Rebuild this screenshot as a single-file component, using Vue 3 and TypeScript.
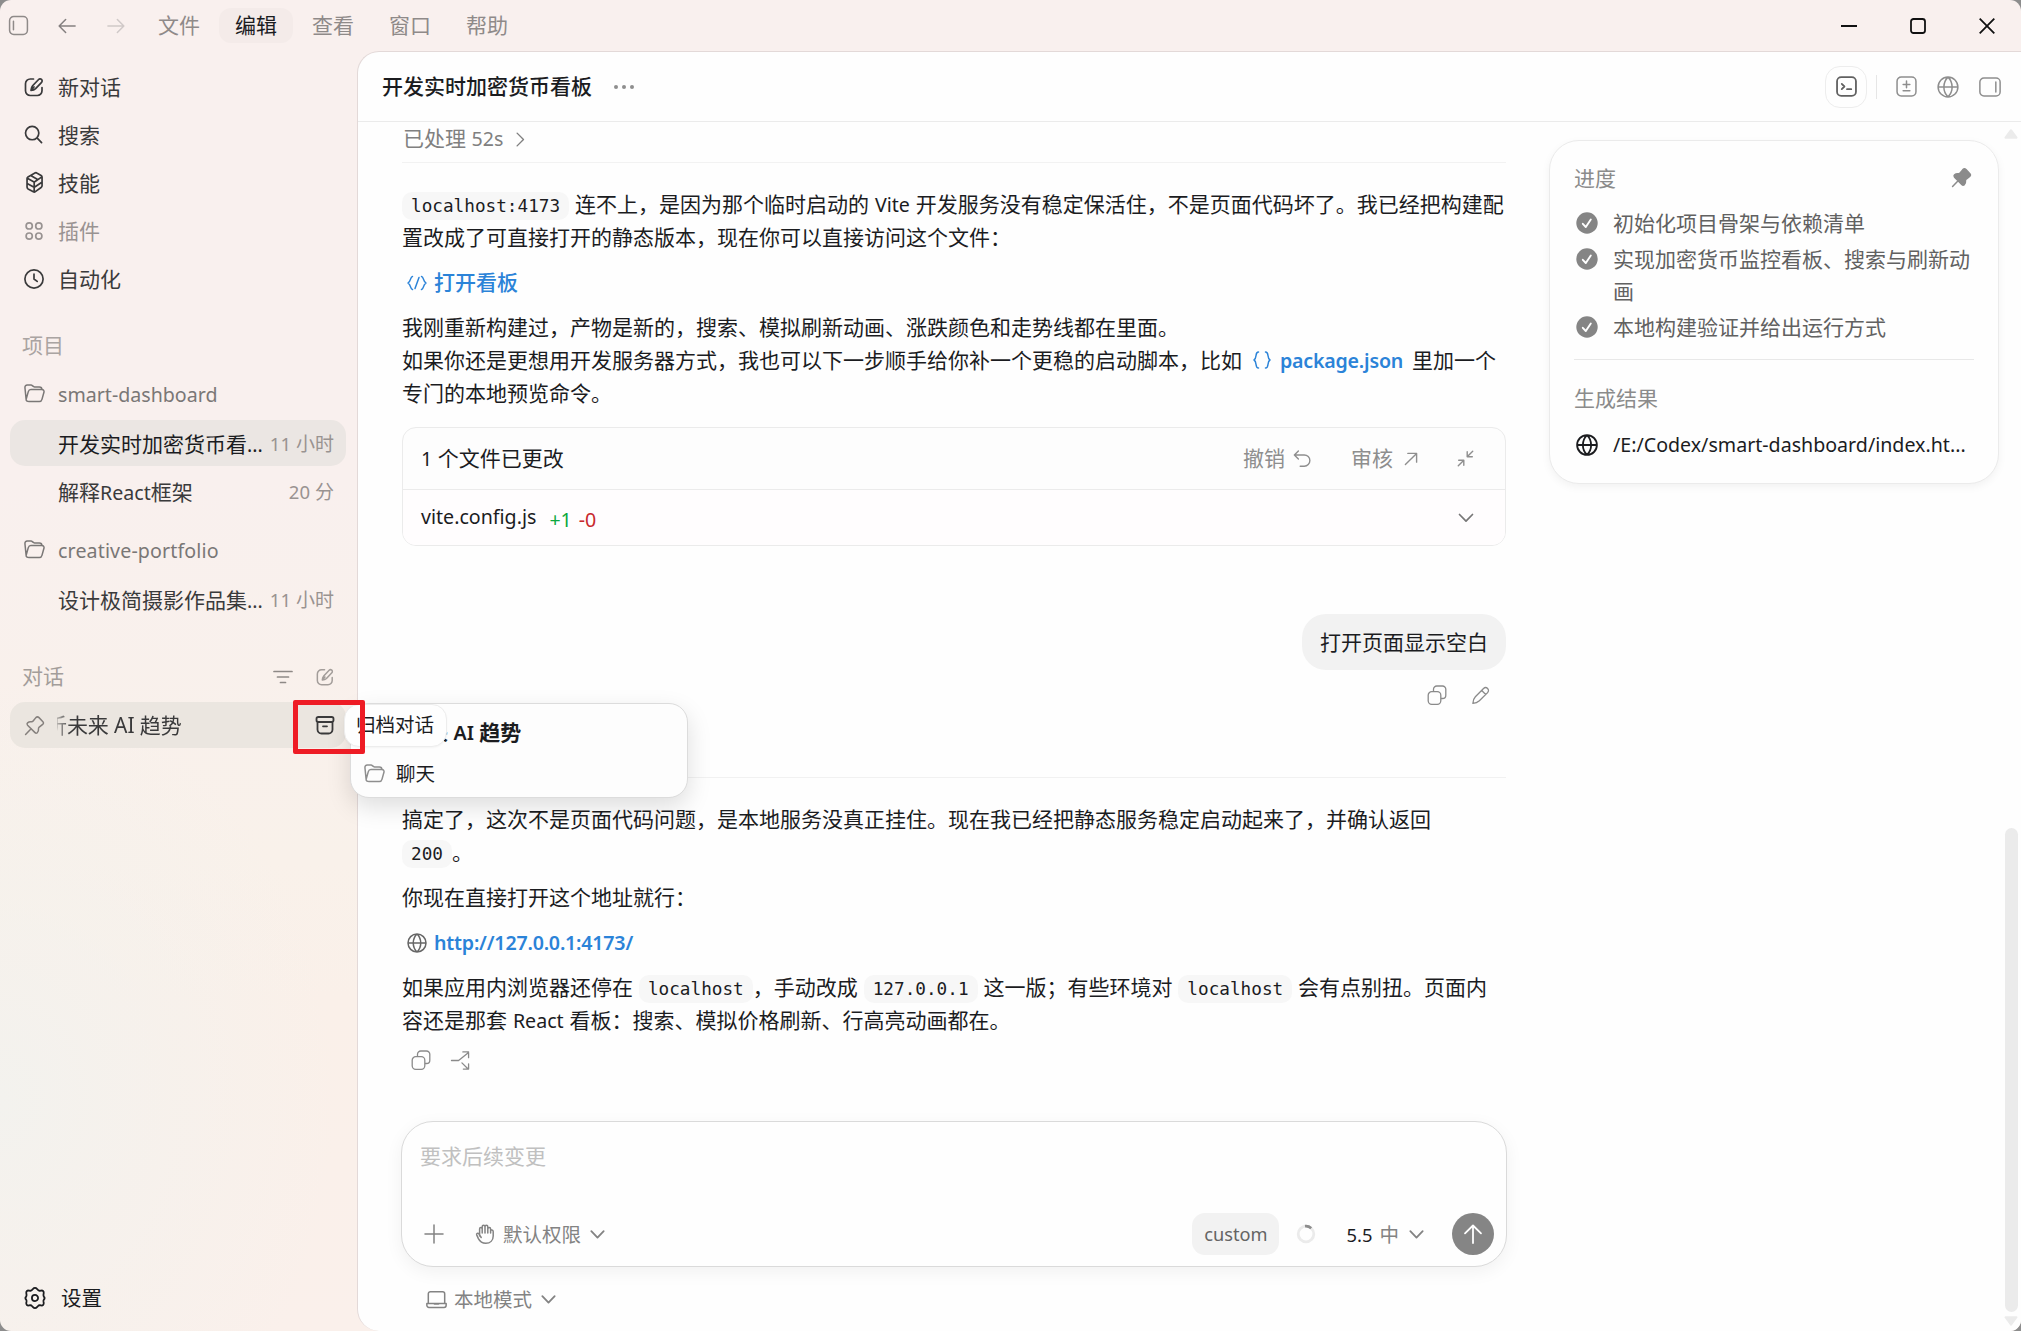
<script setup lang="ts">
import { h, type FunctionalComponent } from 'vue'

const paths: Record<string, string> = {
  sidebar: 'M5.5 1.5h9a4 4 0 0 1 4 4v9a4 4 0 0 1-4 4h-9a4 4 0 0 1-4-4v-9a4 4 0 0 1 4-4zM5.200 6v8',
  back: 'M19 10H1.500M8.500 2.800L1.300 10l7.200 7.200',
  forward: 'M1 10h17.500M11.500 2.800l7.200 7.200-7.200 7.200',
  compose: 'M9.500 2H6.200A4.700 4.700 0 0 0 1.500 6.700v7.100a4.700 4.700 0 0 0 4.700 4.700h7.100a4.700 4.700 0 0 0 4.700-4.700v-3.300M7 13.300c.1-2 .5-3.300 1.600-4.500l6-6.300a2 2 0 0 1 3 2.800l-6 6.300c-1.200 1.200-2.600 1.600-4.600 1.700zM7 13.300l3-3.300',
  search: 'M8.600 1.500a7 7 0 1 1 0 14 7 7 0 0 1 0-14zM13.700 13.600l4.800 4.900',
  cube: 'M10.800 .8c.5-.2.900-.2 1.300.1l4.200 2.400c.6.400.9.800.9 1.500v8.400c0 .7-.3 1.200-.9 1.600l-5.500 3.900c-.6.500-1.300.5-1.900.1l-5-2.700c-.7-.4-1-.9-1-1.700V6.300c0-.7.300-1.200.9-1.600zM3.200 6l5.500 3c.6.400 1.300.4 1.900 0L17 4.600M9.700 9.500V19M3 11l5.700 3.100c.6.300 1.300.3 1.900-.1L17 9.800M6.800 3.600l5.800 3.300',
  grid: 'M5.200 1.800a3.100 3.100 0 1 1 0 6.200 3.100 3.100 0 0 1 0-6.200zM14.800 1.800a3.100 3.100 0 1 1 0 6.200 3.100 3.100 0 0 1 0-6.200zM5.200 12a3.100 3.100 0 1 1 0 6.200 3.100 3.100 0 0 1 0-6.200zM14.800 12a3.100 3.100 0 1 1 0 6.200 3.100 3.100 0 0 1 0-6.200z',
  clock: 'M10 .9a9.100 9.100 0 1 1 0 18.200A9.100 9.100 0 0 1 10 .9zM10 5.200V10l3.200 2.400',
  folder: 'M2 15.500L.900 4.500C.8 2.900 1.700 2 3.100 2h3.600c1.300 0 1.700 1.700 3.300 1.700h4.600c1.700 0 2.500.9 2.600 2.600M4.800 17.600h9.800c1.400 0 2.200-.7 2.500-2L19 8.800c.4-1.500-.4-2.500-1.900-2.500H6.600c-1.300 0-2.100.6-2.500 1.900l-2 7c-.5 1.500.9 2.400 2.700 2.400z',
  filter: 'M1 4.500h18M4.500 10h11M7.500 15.500h5',
  pin: 'M1.500 18.500l5.300-5.500M11.300 2.500c1-1 2-1 3 0l3.500 3.600c1 1 1 2 0 2.800l-3.300 2.600c-.5.5-.8 1-.7 1.700.2 1.700-.2 2.900-1.300 3.800-.8.5-1.500.3-2-.2L3.400 9.700c-.7-.8-.7-1.500 0-2.200 1-.9 2.200-1.200 3.600-1 .7.100 1.300-.2 1.700-.7z',
  archive: 'M3.300 2h13.400c1.200 0 1.800.6 1.800 1.700v1.600c0 1.100-.6 1.700-1.800 1.700H3.300C2.100 7 1.500 6.400 1.500 5.300V3.700C1.500 2.600 2.100 2 3.300 2zM2.500 7v7.500a4 4 0 0 0 4 4h7a4 4 0 0 0 4-4V7M8 11.300h4',
  terminal: 'M5 1h10a4 4 0 0 1 4 4v10a4 4 0 0 1-4 4H5a4 4 0 0 1-4-4V5a4 4 0 0 1 4-4zM5.500 7.500L8 10l-2.500 2.500M10.500 12.500h4',
  diff: 'M5 1h10a4 4 0 0 1 4 4v10a4 4 0 0 1-4 4H5a4 4 0 0 1-4-4V5a4 4 0 0 1 4-4zM10 4.800v6.400M6.800 8h6.400M6.800 14h6.400',
  globe: 'M10 1a9 9 0 1 1 0 18 9 9 0 0 1 0-18zM10 1c5 5 5 13 0 18M10 1c-5 5-5 13 0 18M1 10h18',
  panel: 'M4.500 1.800h11A3.700 3.700 0 0 1 19.200 5.500v9a3.700 3.700 0 0 1-3.700 3.700h-11A3.700 3.700 0 0 1 .8 14.500v-9A3.700 3.700 0 0 1 4.500 1.800zM15.300 5.500v9',
  code: 'M5.500 3.500C3 4 4.500 7.500 1 10c3.500 2.500 2 6 4.500 6.500M14.500 3.500c2.500.5 1 4 4.500 6.500-3.500 2.500-2 6-4.500 6.500M12 4.500L8 15.500',
  braces: 'M6.500 2C2.500 2 5.500 8 2 10c3.500 2 .5 8 4.500 8M13.500 2c4 0 1 6 4.500 8-3.500 2-.5 8-4.500 8',
  chevDown: 'M3.500 6.500L10 13.200l6.500-6.700',
  chevRight: 'M6 2.500l7.500 7.500L6 17.500',
  undo: 'M6 1L1.500 5.500 6 10M1.500 5.500H12.500a6 6 0 0 1 0 12.500H8',
  upRight: 'M2 18L18 2M5.500 2H18v12.500',
  collapse: 'M18.500 1.500L12 8M12 2v6h6M1.500 18.500L8 12M2 12h6v6',
  copy: 'M4.700 6.700h5.600a3.500 3.500 0 0 1 3.500 3.500v5.600a3.500 3.500 0 0 1-3.500 3.500H4.700a3.500 3.500 0 0 1-3.500-3.500v-5.600a3.500 3.500 0 0 1 3.500-3.500zM6.500 6.500V4.300A3.300 3.300 0 0 1 9.800 1h5.700A3.300 3.300 0 0 1 18.800 4.300v5.900a3.300 3.300 0 0 1-3.300 3.300h-1.600',
  pencil: 'M2 18.300c.2-3.300.9-5.200 2.600-6.900l8.600-8.700a3 3 0 0 1 4.300 4.300l-8.700 8.600C7 17.300 5.200 18.200 2 18.300zM11.300 4.700l4.200 4.200',
  fork: 'M.5 10H8L18.500 1.500M12.500 1h6v6M11.500 12.500l6.500 6.500M18.500 13.500V19h-5.500',
  hand: 'M4.600 12V5c0-2 2.600-2 2.600 0v4M7.200 5.500V2.800c0-2 2.800-2 2.800 0V9M10 4.500V2.800c0-2 2.800-2 2.800 0V9M12.800 5c0-2 2.800-2 2.800 0v4M15.600 7c.2-1.500 2.600-1.300 2.600.5V12c0 4.300-3 7.300-7.400 7.300-3.600 0-5.900-1.700-7.400-4.700l-1.700-3.700c-.6-1.500 1.200-2.400 2.200-1l2.300 3.600',
  plus: 'M10 1v18M1 10h18',
  laptop: 'M4.200 2.500h11.600a2 2 0 0 1 2 2v9.200H2.200V4.500a2 2 0 0 1 2-2zM.8 13.700h6.400c.8.900 4.800.900 5.600 0h6.400v1.800a2 2 0 0 1-2 2H2.800a2 2 0 0 1-2-2z',
  up: 'M10 19V1.500M2 9.300l8-7.800 8 7.800',
  gear: 'M8.200 1.700c1-1.200 2.600-1.200 3.600 0l.9 1c.4.500.9.800 1.600.7l1.300-.2c1.600-.2 2.600 1 2.300 2.600l-.2 1.200c-.1.700 0 1.200.4 1.700.9 1 .9 1.700 0 2.700-.4.500-.5 1-.4 1.700l.2 1.200c.3 1.600-.7 2.800-2.300 2.500l-1.300-.2c-.7 0-1.200.2-1.600.7l-.9 1c-1 1.200-2.600 1.200-3.600 0l-.9-1c-.4-.5-.9-.7-1.600-.7l-1.300.2c-1.600.3-2.600-.9-2.300-2.500l.2-1.200c.1-.7 0-1.200-.4-1.700-.9-1-.9-1.700 0-2.700.4-.5.5-1 .4-1.700l-.2-1.200c-.3-1.600.7-2.800 2.300-2.600l1.300.2c.7.100 1.200-.2 1.600-.7zM10 7.200a2.800 2.800 0 1 1 0 5.600 2.800 2.800 0 0 1 0-5.600z',
}

interface IcoProps { n: string; s?: number; w?: number; fill?: string }
const Ico: FunctionalComponent<IcoProps> = (p) => {
  const s = p.s ?? 20
  return h('svg', { width: s, height: s, viewBox: '0 0 20 20', fill: p.fill ?? 'none', stroke: 'currentColor',
    'stroke-width': ((p.w ?? 1.5) * 20) / s, 'stroke-linecap': 'round', 'stroke-linejoin': 'round', style: 'flex:none;overflow:visible' },
    [h('path', { d: paths[p.n] })])
}
Ico.props = ['n', 's', 'w', 'fill']

const menus = ['文件', '编辑', '查看', '窗口', '帮助']
const nav = [
  { icon: 'compose', label: '新对话', size: 20 },
  { icon: 'search', label: '搜索', size: 19 },
  { icon: 'cube', label: '技能', size: 21 },
  { icon: 'grid', label: '插件', size: 20, off: true },
  { icon: 'clock', label: '自动化', size: 20 },
]
const steps = ['初始化项目骨架与依赖清单', '实现加密货币监控看板、搜索与刷新动画', '本地构建验证并给出运行方式']
</script>

<template>
  <div class="desktop">
    <div class="window">
      <header class="titlebar">
        <Ico n="sidebar" :s="21" class="t-side" />
        <Ico n="back" :s="18" class="t-back" />
        <Ico n="forward" :s="18" class="t-fwd" />
        <nav class="menus">
          <span v-for="m in menus" :key="m" :class="['menu', { on: m === '编辑' }]">{{ m }}</span>
        </nav>
        <div class="winbtns">
          <svg width="16" height="16" viewBox="0 0 16 16"><path d="M0 8h16" /></svg>
          <svg width="16" height="16" viewBox="0 0 16 16"><rect x="1" y="1" width="14" height="14" rx="2.500" /></svg>
          <svg width="16" height="16" viewBox="0 0 16 16"><path d="M.7 .7l14.600 14.600M15.300 .7L.7 15.300" /></svg>
        </div>
      </header>

      <div class="body">
        <aside class="side">
          <div v-for="i in nav" :key="i.label" :class="['nav', { off: i.off }]">
            <span class="slot"><Ico :n="i.icon" :s="i.size" :w="1.7" /></span>{{ i.label }}
          </div>
          <div class="sec">项目</div>
          <div class="proj"><span class="slot"><Ico n="folder" :s="21" /></span><span class="l">smart-dashboard</span></div>
          <div class="conv sel"><span class="name">开发实时加密货币看<span class="l">...</span></span><span class="time"><span class="n">11</span> 小时</span></div>
          <div class="conv second"><span class="name">解释<span class="l">React</span>框架</span><span class="time"><span class="n">20</span> 分</span></div>
          <div class="proj two"><span class="slot"><Ico n="folder" :s="21" /></span><span class="l cp">creative-portfolio</span></div>
          <div class="conv third"><span class="name">设计极简摄影作品集<span class="l">...</span></span><span class="time"><span class="n">11</span> 小时</span></div>
          <div class="chats"><span>对话</span><Ico n="filter" :s="20" :w="1.7" class="f" /><Ico n="compose" :s="18" /></div>
          <div class="chat"><Ico n="pin" :s="21" class="p" /><span class="clip"><span>析未来 AI 趋势</span></span><Ico n="archive" :s="20" :w="1.8" class="a" /></div>
          <div class="settings"><Ico n="gear" :s="22" :w="1.8" />设置</div>
        </aside>

        <main class="main">
          <div class="head">
            <h1>开发实时加密货币看板</h1>
            <span class="dots"><i></i><i></i><i></i></span>
            <div class="tools">
              <span class="term"><Ico n="terminal" :s="21" :w="1.8" /></span>
              <span class="bar"></span>
              <Ico n="diff" :s="21" />
              <Ico n="globe" :s="22" />
              <Ico n="panel" :s="22" />
            </div>
          </div>

          <div class="content">
            <div class="col">
              <div class="done">已处理 <span class="l">52s</span> <Ico n="chevRight" :s="17" :w="1.4" /></div>
              <p class="p1"><code>localhost:4173</code> 连不上，是因为那个临时启动的 <span class="l">Vite</span> 开发服务没有稳定保活住，不是页面代码坏了。我已经把构建配<br>置改成了可直接打开的静态版本，现在你可以直接访问这个文件：</p>
              <p class="lk"><Ico n="code" :s="20" /><a>打开看板</a></p>
              <p>我刚重新构建过，产物是新的，搜索、模拟刷新动画、涨跌颜色和走势线都在里面。<br>如果你还是更想用开发服务器方式，我也可以下一步顺手给你补一个更稳的启动脚本，比如 <span class="pk"><Ico n="braces" :s="20" /><a class="l">package.json</a></span> 里加一个<br>专门的本地预览命令。</p>

              <section class="files">
                <div class="fh"><span><span class="l">1</span> 个文件已更改</span><div class="acts"><span>撤销</span><Ico n="undo" :s="18" :w="1.4" /><span class="rv">审核</span><Ico n="upRight" :s="14" :w="1.4" class="ur" /><Ico n="collapse" :s="17" :w="1.4" /></div></div>
                <div class="fr"><span class="fn l">vite.config.js</span><span class="add">+1</span><span class="del">-0</span><Ico n="chevDown" :s="20" :w="1.7" class="cv" /></div>
              </section>

              <div class="bubble">打开页面显示空白</div>
              <div class="bi"><Ico n="copy" :s="20" :w="1.3" /><Ico n="pencil" :s="19" :w="1.3" /></div>
              <div class="rule"></div>

              <p class="r1">搞定了，这次不是页面代码问题，是本地服务没真正挂住。现在我已经把静态服务稳定启动起来了，并确认返回<br><code>200</code>。</p>
              <p>你现在直接打开这个地址就行：</p>
              <p class="lk url"><Ico n="globe" :s="20" /><a class="l">http://127.0.0.1:4173/</a></p>
              <p class="last">如果应用内浏览器还停在 <code>localhost</code>，手动改成 <code>127.0.0.1</code> 这一版；有些环境对 <code>localhost</code> 会有点别扭。页面内<br>容还是那套 <span class="l">React</span> 看板：搜索、模拟价格刷新、行高亮动画都在。</p>
              <div class="ri"><Ico n="copy" :s="20" :w="1.3" /><Ico n="fork" :s="19" :w="1.3" /></div>

              <div class="composer">
                <div class="ph">要求后续变更</div>
                <div class="cb">
                  <Ico n="plus" :s="20" />
                  <Ico n="hand" :s="20" class="hd" />
                  <span class="perm">默认权限</span>
                  <Ico n="chevDown" :s="19" :w="1.8" />
                  <span class="custom">custom</span>
                  <svg class="spin" width="20" height="20" viewBox="0 0 20 20" fill="none" stroke-width="2.800"><circle cx="10" cy="10" r="7.800" stroke="#ebebeb" /><path d="M9 2.200a7.800 7.800 0 0 1 6.200 2" stroke="#8d8d8d" /></svg>
                  <span class="ver">5.5</span><span class="mid">中</span>
                  <Ico n="chevDown" :s="19" :w="1.8" />
                  <span class="send"><Ico n="up" :s="20" :w="1.8" /></span>
                </div>
              </div>
              <div class="local"><Ico n="laptop" :s="21" /><span>本地模式</span><Ico n="chevDown" :s="19" :w="1.8" /></div>
            </div>

            <section class="card">
              <div class="ct"><span>进度</span><Ico n="pin" :s="21" fill="currentColor" class="fp" /></div>
              <div v-for="s in steps" :key="s" class="step">
                <svg width="22" height="22" viewBox="0 0 22 22"><circle cx="11" cy="11" r="10.700" fill="#858585" /><path d="M6.800 11.800l3 3.200 5-7.500" fill="none" stroke="#fff" stroke-width="1.900" stroke-linecap="round" stroke-linejoin="round" /></svg>
                <span>{{ s }}</span>
              </div>
              <div class="cr"></div>
              <div class="gt">生成结果</div>
              <div class="res"><Ico n="globe" :s="22" :w="1.8" /><span class="l">/E:/Codex/smart-dashboard/index.ht...</span></div>
            </section>

            <div class="scroll"><svg width="16" height="12" viewBox="0 0 16 12"><path d="M8 2.200L13.500 9.700h-11z" fill="#ebebeb" stroke="#ebebeb" stroke-width="2" stroke-linejoin="round" /></svg><div class="thumb"></div><svg width="16" height="12" viewBox="0 0 16 12"><path d="M8 9.700L2.500 2.200h11z" fill="#ebebeb" stroke="#ebebeb" stroke-width="2" stroke-linejoin="round" /></svg></div>
          </div>
        </main>
      </div>

      <div class="pop">
        <div class="pt">析未来 <span class="l">AI</span> 趋势</div>
        <div class="pf"><Ico n="folder" :s="21" /><span>聊天</span></div>
      </div>
      <div class="tip">归档对话</div>
      <div class="mark"></div>
    </div>
  </div>
</template>

<style>
html, body { margin: 0; overflow: hidden; }
</style>
<style scoped>
* { box-sizing: border-box; }
.desktop { width: 2021px; height: 1331px; background: #8d8d8d; font: 400 21px/33px "Noto Sans", "Noto Sans CJK SC", sans-serif; color: #1b1c1f; overflow: hidden; white-space: nowrap; }
.l { font-size: .934em; }
.n { font-size: .975em; }
.cp { letter-spacing: .13px; }
.window { position: relative; width: 2021px; height: 1331px; border-radius: 11px; overflow: hidden; display: flex; flex-direction: column;
  background: radial-gradient(ellipse 420px 520px at 0 1100px, #f3f2ee 0%, rgba(243,242,238,0) 80%), linear-gradient(180deg, #f9f0ee 0, #f9f0ee 480px, #f9f1ea 860px, #faf0e9 1000px, #faf0eb 1331px); }
.titlebar { height: 51px; flex: none; display: flex; align-items: center; color: #8f8a89; }
.t-side { margin-left: 8px; margin-top: -1px; }
.t-back { margin-left: 29px; color: #858080; }
.t-fwd { margin-left: 31px; color: #d0c9c8; }
.menus { display: flex; gap: 3px; margin-left: 17px; }
.menu { width: 74px; height: 35px; line-height: 35px; text-align: center; border-radius: 12px; }
.menu.on { background: #f4ebe9; color: #1b1c1f; }
.winbtns { margin-left: auto; margin-right: 26px; display: flex; gap: 53px; }
.winbtns svg { fill: none; stroke: #111; stroke-width: 1.8; overflow: visible; }
.body { flex: 1; display: flex; min-height: 0; }
.side { width: 357px; flex: none; padding: 12px 11px 0 10px; display: flex; flex-direction: column; color: #3a3a3b; }
.nav { height: 48px; display: flex; align-items: center; }
.nav.off { color: #999392; }
.slot { width: 34px; margin-left: 14px; display: flex; align-items: center; flex: none; }
.nav .slot { padding-bottom: 1px; }
.proj .slot { padding-bottom: 2px; }
.sec { margin: 26px 0 0 12px; height: 33px; color: #aaa4a2; }
.proj { height: 33px; margin-top: 16px; display: flex; align-items: center; color: #7a7776; }
.conv { height: 46px; display: flex; align-items: center; justify-content: space-between; padding: 2px 12px 0 48px; border-radius: 15px; }
.conv.sel { background: #ebe6e3; margin-top: 9px; color: #1b1c1f; }
.conv.second { margin-top: 2px; }
.time { font-size: 19px; color: #999391; }
.proj.two { margin-top: 20px; }
.conv.third { margin-top: 9px; }
.chats { margin: 38px 12px 0; height: 33px; display: flex; align-items: center; color: #a39d9a; }
.chats .f { margin-left: auto; margin-right: 23px; color: #8e8986; }
.chat { margin-top: 9px; height: 46px; border-radius: 15px; background: #ebe6e0; display: flex; align-items: center; padding: 0 11px 0 14px; color: #3a3a3b; }
.chat .p { color: #85807d; }
.clip { width: 200px; margin-left: 12px; overflow: hidden; -webkit-mask-image: linear-gradient(90deg, rgba(0,0,0,.3), #000 14px); mask-image: linear-gradient(90deg, rgba(0,0,0,.3), #000 14px); }
.clip span { margin-left: -11px; display: block; letter-spacing: -.1px; }
.chat .a { margin-left: auto; }
.settings { margin-top: auto; margin-bottom: 15px; height: 36px; display: flex; align-items: center; gap: 15px; padding-left: 14px; color: #1b1c1f; font-size: 20.5px; }
.main { flex: 1; background: #fefefe; border: 1px solid #e3d9d8; border-right: 0; border-bottom: 0; border-radius: 22px 0 0 22px; display: flex; flex-direction: column; min-width: 0; }
.head { height: 70px; flex: none; border-bottom: 1px solid #ebebeb; display: flex; align-items: center; padding: 0 20px 0 24px; }
h1 { font-size: 21px; font-weight: 500; margin: 0; }
.dots { display: flex; gap: 4px; margin-left: 22px; }
.dots i { width: 4px; height: 4px; border-radius: 2px; background: #8e8e8e; }
.tools { margin-left: auto; display: flex; align-items: center; color: #8e8e8e; }
.term { width: 42px; height: 42px; border: 1px solid #ededed; border-radius: 15px; display: flex; align-items: center; justify-content: center; color: #606060; margin-right: 9px; }
.bar { width: 1px; height: 24px; background: #e6e6e6; margin-right: 19px; }
.tools svg + svg { margin-left: 20px; }
.content { flex: 1; display: flex; min-height: 0; }
.col { width: 1104px; margin-left: 44px; flex: none; display: flex; flex-direction: column; }
.done { height: 41px; flex: none; border-bottom: 1px solid #f2f2f2; line-height: 33px; color: #808080; margin-bottom: 25px; padding-left: 1px; }
.done svg { margin-left: 3px; vertical-align: -2px; }
p { margin: 0 0 12px; flex: none; word-spacing: .45px; }
code { font: 17.7px/20px "DejaVu Sans Mono", monospace; padding: 4px 9px; background: #f7f7f7; border-radius: 10px; }
a { color: #2b83d8; font-weight: 500; }
a.l { font-weight: 600; letter-spacing: -.2px; }
.lk { display: flex; align-items: center; color: #2b83d8; padding-left: 5px; height: 33px; }
.lk a { margin-left: 7px; }
.url { color: #666; }
.pk { color: #2b83d8; margin: 0 3px 0 4px; }
.pk svg { vertical-align: -2px; margin-right: 8px; }
.files { margin-top: 5px; height: 119px; flex: none; border: 1px solid #ebebeb; border-radius: 14px; background: #fdfdfd; overflow: hidden; }
.fh { height: 62px; border-bottom: 1px solid #ebebeb; display: flex; align-items: center; justify-content: space-between; padding: 0 31px 0 18px; }
.acts { display: flex; align-items: center; color: #8e8e8e; }
.acts span { margin-right: 8px; }
.acts .rv { margin-left: 40px; margin-right: 11px; }
.ur { margin-right: 39px; }
.fr { height: 56px; background: #fffdfe; display: flex; align-items: center; padding: 0 29px 0 18px; }
.fn { padding-bottom: 3px; }
.add { color: #0ba840; margin-left: 13px; font-size: 19.6px; padding-top: 3px; }
.del { color: #c8282c; margin-left: 7px; font-size: 19.6px; padding-top: 3px; }
.cv { margin-left: auto; color: #777; }
.bubble { align-self: flex-end; margin-top: 68px; height: 56px; flex: none; line-height: 56px; padding: 0 18px; border-radius: 24px; background: #f2f2f2; }
.bi { height: 50px; flex: none; display: flex; justify-content: flex-end; align-items: center; gap: 24px; padding-right: 16px; color: #8a8a8a; }
.rule { height: 1px; flex: none; background: #f1f1f1; margin: 57px 0 25px; }
.r1 { height: 66px; }
.last { margin-bottom: 0; }
.ri { height: 46px; flex: none; display: flex; align-items: center; gap: 20px; padding-left: 9px; color: #8a8a8a; }
.composer { margin: 38px -1px 0; height: 146px; flex: none; border: 1px solid #dadada; border-radius: 32px; background: #fefefe; box-shadow: 0 5px 18px rgba(0,0,0,.055); padding: 18px 12px 11px 18px; display: flex; flex-direction: column; justify-content: space-between; }
.ph { color: #c0c0c0; }
.cb { display: flex; align-items: center; height: 42px; color: #838383; font-size: 19.5px; padding-left: 4px; }
.hd { margin-left: 31px; }
.perm { margin: 0 7px 0 8px; }
.custom { margin-left: auto; width: 87px; height: 42px; line-height: 42px; text-align: center; border-radius: 13px; background: #f2f2f2; color: #646464; font-size: 18.2px; }
.spin { margin-left: 17px; }
.ver { margin-left: 30px; color: #1b1c1f; width: 33px; font-size: 18.4px; }
.mid { margin-right: 8px; }
.send { width: 42px; height: 42px; margin-left: 26px; border-radius: 50%; background: #858585; color: #fff; display: flex; align-items: center; justify-content: center; }
.local { display: flex; align-items: center; margin-top: 16px; padding-left: 24px; color: #838383; font-size: 19.5px; }
.local span { margin: 0 7px 0 7px; }
.card { width: 450px; height: 344px; flex: none; margin: 18px 0 0 43px; border: 1px solid #ebebeb; border-radius: 30px; background: #fefefe; box-shadow: 0 3px 8px rgba(0,0,0,.05); padding: 21px 24px 0; color: #616161; }
.ct { display: flex; justify-content: space-between; color: #8b8b8b; margin-bottom: 12px; }
.fp { margin: 5px 2px 0; }
.step { display: flex; margin-bottom: 3px; white-space: normal; line-height: 32.5px; }
.step svg { flex: none; margin: 5px 15px 0 2px; }
.cr { height: 1px; background: #e8e8e8; margin: 16px 0 22px; }
.gt { color: #8b8b8b; margin-bottom: 13px; }
.res { display: flex; align-items: center; color: #1b1c1f; padding-left: 2px; gap: 15px; }
.scroll { margin-left: auto; width: 20px; display: flex; flex-direction: column; align-items: center; padding: 6px 0 4px; }
.thumb { width: 13px; height: 484px; margin-top: auto; margin-bottom: 3px; border-radius: 7px; background: #ebebeb; }
.pop { position: absolute; left: 350px; top: 703px; width: 338px; height: 95px; border: 1px solid #dcdcdc; border-radius: 19px; background: #fdfdfd; box-shadow: 0 9px 24px rgba(0,0,0,.13); padding: 12px; }
.pt { font-weight: 600; padding-left: 22px; line-height: 32px; margin-bottom: 1px; }
.pf { display: flex; align-items: center; font-size: 19.5px; margin-top: 8px; }
.pf svg { color: #8e8e8e; margin: 0 11px 0 1px; }
.tip { position: absolute; left: 344px; top: 704px; width: 103px; height: 43px; line-height: 39px; font-size: 19.5px; padding-left: 11px; border-radius: 15px; border: 1px solid #ededed; background: #fefefe; box-shadow: 0 1px 2px rgba(0,0,0,.04); }
.mark { position: absolute; left: 293px; top: 700px; width: 72px; height: 54px; border: 5px solid #ee1c25; border-radius: 2px; }
</style>
